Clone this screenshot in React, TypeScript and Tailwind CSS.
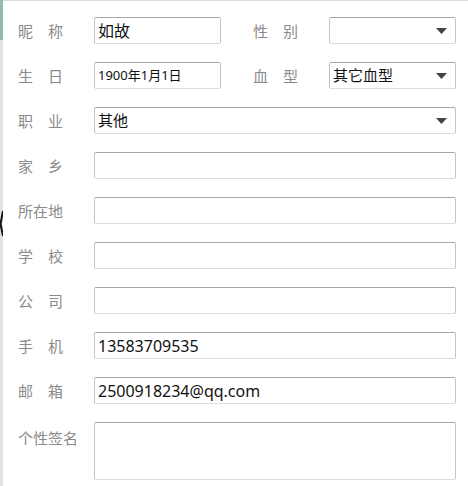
import React from 'react';

// --- 색상 ---
const LABEL = "text-[#8a8a8a]";
const BOX = "h-[27px] rounded-[2px] border border-[#c4c4c4] border-t-[#a8a8a8] border-b-[#dcdcdc] bg-white";
const FONT = { fontFamily: '"Noto Sans", "Noto Sans CJK SC", sans-serif' };

const Label = ({ text }: { text: string }) => (
    <div className={`w-[76px] shrink-0 text-[15px] leading-[20px] ${LABEL}`}>
        <span className="flex w-[45px] justify-between">
            {text.split('').map((c, i) => <span key={i}>{c}</span>)}
        </span>
    </div>
);

const Arrow = () => (
    <svg width="11" height="6" viewBox="0 0 11 6" className="shrink-0">
        <polygon points="0,0 11,0 5.5,6" fill="#444" />
    </svg>
);

const TextBox = ({ value = '', w = 'w-full', small = false }: { value?: string; w?: string; small?: boolean }) => (
    <div className={`${BOX} ${w} flex items-center pl-[3px] ${small ? 'text-[13px]' : 'text-[16px]'} text-[#111]`}>
        {value}
    </div>
);

const Select = ({ value = '', w = 'w-full' }: { value?: string; w?: string }) => (
    <div className={`${BOX} ${w} flex items-center justify-between pl-[3px] pr-[8px] text-[15px] text-[#111]`}>
        <span>{value}</span>
        <Arrow />
    </div>
);

const ROWS = [
    { label: '家乡', value: '' },
    { label: '所在地', value: '' },
    { label: '学校', value: '' },
    { label: '公司', value: '' },
    { label: '手机', value: '13583709535' },
    { label: '邮箱', value: '2500918234@qq.com' },
];

export default function App() {
    return (
        <div className="flex h-[486px] w-[468px] overflow-hidden bg-white" style={FONT}>
            {/* 뒤쪽 창 가장자리 */}
            <div className="flex w-[3px] shrink-0 flex-col">
                <div className="h-[40px] bg-[#8fbcb3]" />
                <div className="relative flex-1 bg-[#e2e2e2]">
                    <svg width="3" height="28" viewBox="0 0 3 28" className="absolute left-0 top-[170px]">
                        <path d="M3 1 L0.5 14 L3 26" stroke="#111" strokeWidth="2" fill="none" />
                    </svg>
                </div>
            </div>

            {/* 폼 */}
            <div className="flex flex-1 flex-col gap-[18px] border-t border-[#dcdcdc] pl-[15px] pt-[16px]">
                <div className="flex items-center">
                    <Label text="昵称" />
                    <TextBox value="如故" w="w-[127px]" />
                    <div className="ml-[32px]"><Label text="性别" /></div>
                    <Select w="w-[127px]" />
                </div>
                <div className="flex items-center">
                    <Label text="生日" />
                    <TextBox value="1900年1月1日" w="w-[127px]" small />
                    <div className="ml-[32px]"><Label text="血型" /></div>
                    <Select value="其它血型" w="w-[127px]" />
                </div>
                <div className="flex w-[438px] items-center">
                    <Label text="职业" />
                    <Select value="其他" />
                </div>
                {ROWS.map((r) => (
                    <div key={r.label} className="flex w-[438px] items-center">
                        <Label text={r.label} />
                        <TextBox value={r.value} />
                    </div>
                ))}
                <div className="flex w-[438px] items-start">
                    <div className="pt-[6px]"><Label text="个性签名" /></div>
                    <div className="h-[58px] w-full rounded-[2px] border border-[#c4c4c4] border-t-[#a8a8a8] border-b-[#dcdcdc] bg-white" />
                </div>
            </div>
        </div>
    );
}
